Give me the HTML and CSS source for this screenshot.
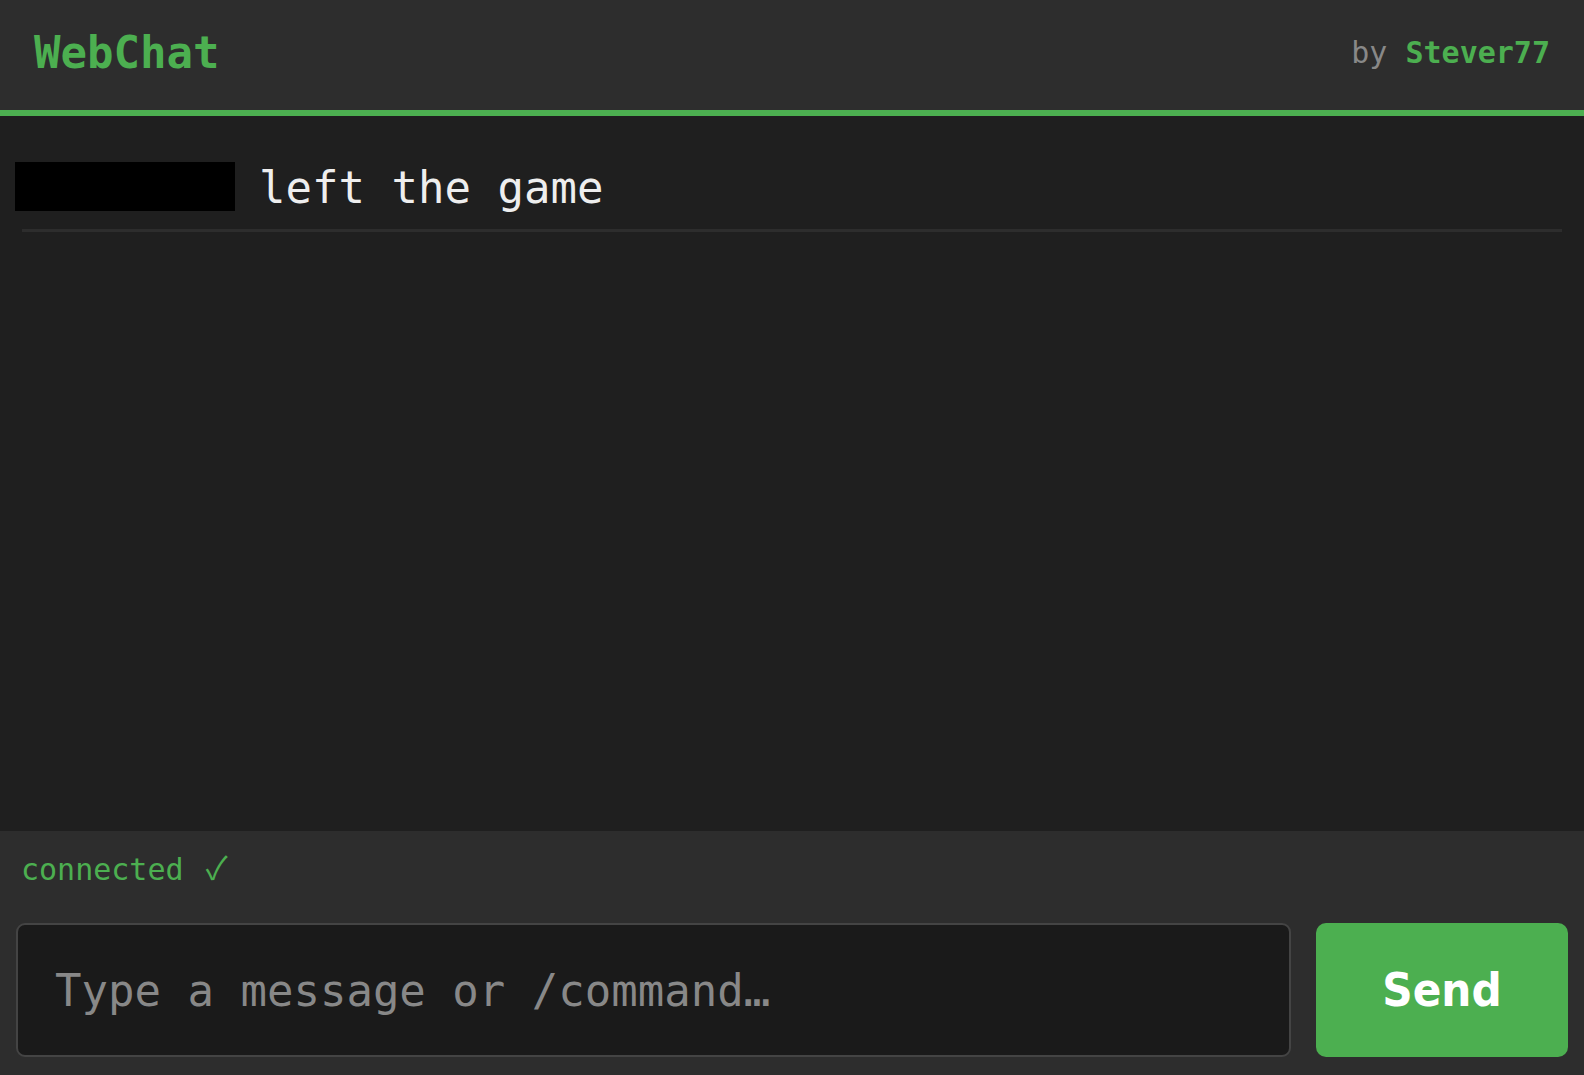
FILE: index.html
```html
<!DOCTYPE html>
<html lang="en">
<head>
<meta charset="utf-8">
<title>WebChat</title>
<link rel="stylesheet" href="styles.css">
</head>
<body>
<div class="app">
  <header class="topbar">
    <h1 class="brand">WebChat</h1>
    <div class="credit">by <span class="author">Stever77</span></div>
  </header>
  <main class="chat">
    <div class="msg">
      <span class="name"></span>
      <span class="text">left the game</span>
    </div>
  </main>
  <footer class="composer">
    <div class="status">connected <span class="check">✓</span></div>
    <form class="inputrow">
      <input class="field" type="text" placeholder="Type a message or /command…">
      <button class="send" type="button">Send</button>
    </form>
  </footer>
</div>
</body>
</html>
```

FILE: styles.css
```css
html, body {
  margin: 0;
  padding: 0;
  height: 100%;
  background: #1f1f1f;
}
* { box-sizing: border-box; }

.app {
  height: 100vh;
  display: flex;
  flex-direction: column;
  font-family: "DejaVu Sans Mono", "Liberation Mono", monospace;
}

.topbar {
  height: 116px;
  flex: 0 0 116px;
  background: #2d2d2d;
  border-bottom: 6px solid #4caf50;
  display: flex;
  align-items: center;
  justify-content: space-between;
  padding: 0 34px 5px 34px;
}

.brand {
  margin: 0;
  font-size: 44px;
  font-weight: bold;
  color: #4caf50;
  line-height: 51px;
}

.credit {
  font-size: 30px;
  color: #888888;
  line-height: 35px;
}
.author {
  color: #4caf50;
  font-weight: bold;
}

.chat {
  flex: 1;
  background: #1f1f1f;
  padding: 20px 22px 0 22px;
  overflow: hidden;
}

.msg {
  display: flex;
  align-items: center;
  padding: 23px 0 16px 0;
  border-bottom: 3px solid #2d2d2d;
}

.name {
  display: inline-block;
  width: 220px;
  height: 49px;
  background: #000000;
  margin-left: -7px;
}

.text {
  margin-left: 24px;
  font-size: 44px;
  line-height: 51px;
  color: #eeeeee;
  padding-top: 3px;
}

.composer {
  flex: 0 0 244px;
  background: #2d2d2d;
  padding: 18px 16px 18px 16px;
  display: flex;
  flex-direction: column;
}

.status {
  font-size: 30px;
  line-height: 35px;
  height: 35px;
  color: #4caf50;
  padding-left: 5px;
  margin-bottom: 39px;
}

.check {
  font-family: "Noto Sans CJK JP", "DejaVu Sans", sans-serif;
  font-size: 32px;
  line-height: 35px;
  margin-left: 4px;
}

.inputrow {
  margin: 0;
  display: flex;
  gap: 25px;
  height: 134px;
}

.field {
  flex: 1;
  height: 134px;
  background: #1a1a1a;
  border: 2px solid #444444;
  border-radius: 9px;
  padding: 0 37px;
  font-family: "DejaVu Sans Mono", "Liberation Mono", monospace;
  font-size: 44px;
  color: #eeeeee;
  outline: none;
}
.field::placeholder {
  color: #888888;
}

.send {
  flex: 0 0 252px;
  height: 134px;
  background: #4caf50;
  border: none;
  border-radius: 10px;
  color: #ffffff;
  font-family: "DejaVu Sans", "Liberation Sans", sans-serif;
  font-stretch: condensed;
  font-weight: bold;
  font-size: 47px;
  padding: 0 0 2px 0;
  cursor: pointer;
}
```
